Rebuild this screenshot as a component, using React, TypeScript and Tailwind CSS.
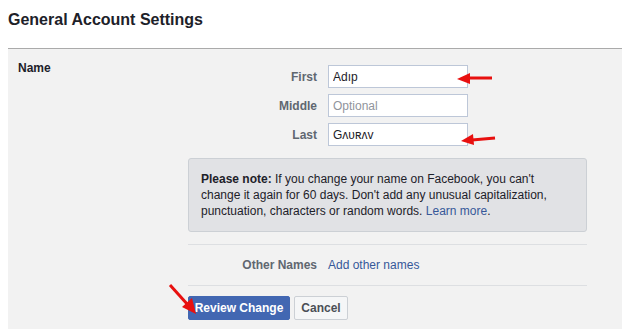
import React from 'react';

function Field({ label, value, placeholder }: { label: string; value?: string; placeholder?: string }) {
  return (
    <div className="flex items-center h-[23px]">
      <div className="w-[129px] text-right text-[12px] font-bold text-[#606770]">{label}</div>
      <input
        readOnly
        value={value ?? ''}
        placeholder={placeholder}
        className="ml-[11px] w-[140px] h-[23px] border border-[#bdc7d8] bg-white px-[4px] text-[12px] text-[#1d2129] placeholder:text-[#90949c] outline-none"
      />
    </div>
  );
}

export default function App() {
  return (
    <div
      className="relative w-[622px] h-[329px] overflow-hidden bg-white flex flex-col"
      style={{ fontFamily: '"Liberation Sans", Arial, sans-serif' }}
    >
      {/* Header */}
      <div className="h-[48px] pl-2 pt-[10px] text-[16px] leading-[20px] font-bold text-[#1d2129]">
        General Account Settings
      </div>

      {/* Settings panel */}
      <div className="ml-2 flex-1 flex border-t border-[#aaaaaa] bg-[#f2f2f2]">
        <div className="w-[180px] pl-[10px] pt-[11px] text-[12px] leading-[16px] font-bold text-[#1d2129]">Name</div>

        <div className="w-[399px] pt-[16px] flex flex-col">
          <div className="flex flex-col gap-[6px]">
            <Field label="First" value="Adıp" />
            <Field label="Middle" placeholder="Optional" />
            <Field label="Last" value="Gʌᴜʀʌᴠ" />
          </div>

          <div className="mt-3 border border-[#ccd0d5] bg-[#e1e2e5] rounded-[3px] px-3 py-3 text-[12px] leading-[16px] text-[#1d2129]">
            <span className="font-bold">Please note:</span> If you change your name on Facebook, you can't
            <br />
            change it again for 60 days. Don't add any unusual capitalization,
            <br />
            punctuation, characters or random words. <span className="text-[#365899]">Learn more</span>.
          </div>

          <div className="mt-3 h-[42px] flex items-center border-t border-b border-[#dddfe2]">
            <div className="w-[129px] text-right text-[12px] font-bold text-[#606770]">Other Names</div>
            <div className="ml-[11px] text-[12px] text-[#365899]">Add other names</div>
          </div>

          <div className="mt-[10px] flex gap-[4px]">
            <button className="h-[24px] w-[102px] rounded-[2px] border border-[#4267b2] bg-[#4267b2] text-[12px] font-bold text-white">
              Review Change
            </button>
            <button className="h-[24px] w-[54px] rounded-[2px] border border-[#ccd0d5] bg-[#f5f6f7] text-[12px] font-bold text-[#4b4f56]">
              Cancel
            </button>
          </div>
        </div>
      </div>

      {/* Red annotation arrows */}
      <svg className="absolute inset-0 pointer-events-none" width="622" height="329">
        <g fill="#e8100f" stroke="#e8100f">
          <line x1="468" y1="78" x2="492" y2="78" strokeWidth="3" />
          <polygon points="457,79 470,73 470,84" stroke="none" />
          <line x1="472" y1="140" x2="495" y2="138" strokeWidth="3" />
          <polygon points="461,141 473,134 474,145" stroke="none" />
          <line x1="170" y1="285" x2="188" y2="305" strokeWidth="3" />
          <polygon points="196,314 182,307 192,298" stroke="none" />
        </g>
      </svg>
    </div>
  );
}
